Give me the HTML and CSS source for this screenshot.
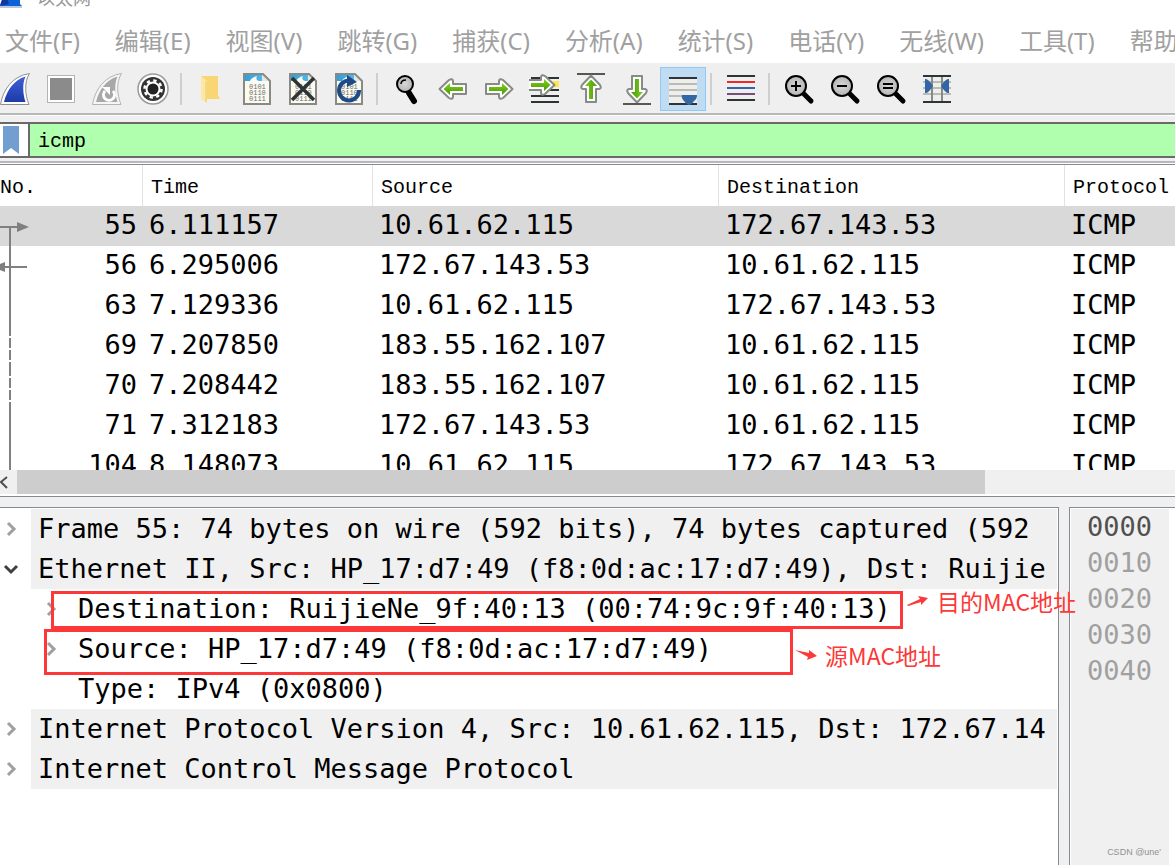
FILE: index.html
```html
<!DOCTYPE html>
<html lang="zh-CN">
<head>
  <meta charset="UTF-8">
  <meta name="viewport" content="width=device-width, initial-scale=1.0">
  <title>以太网</title>
  <link rel="stylesheet" href="styles.css">
</head>
<body>
  <!-- shared icon parts -->
  <svg class="defs" width="0" height="0">
    <defs>
      <linearGradient id="blue" x1="0" y1="0" x2="0" y2="1">
        <stop offset="0" stop-color="#4060d8"/><stop offset="1" stop-color="#1c3aa8"/>
      </linearGradient>
      <linearGradient id="green" x1="0" y1="0" x2="0" y2="1">
        <stop offset="0" stop-color="#82d01e"/><stop offset="1" stop-color="#469a06"/>
      </linearGradient>
      <linearGradient id="sky" x1="0" y1="0" x2="1" y2="0">
        <stop offset="0" stop-color="#2f9fdc"/><stop offset="1" stop-color="#5cc0ec"/>
      </linearGradient>
      <radialGradient id="lens">
        <stop offset="0" stop-color="#d8d8d8"/><stop offset="1" stop-color="#b4b4b4"/>
      </radialGradient>
      <symbol id="page" viewBox="0 0 32 32">
        <path d="M3 1H22L29 8V31H3Z" fill="#fbfbf2"/>
        <path d="M4 2H21L27 8H18C15 7 15 5 16 3C12 4 10 6 9 8H4Z" fill="url(#sky)"/>
        <path d="M21 2V8H28Z" fill="#e8e8e0"/>
        <g class="bits"><text x="8" y="16">0101</text><text x="8" y="22">0110</text><text x="8" y="28">0111</text></g>
        <path d="M3 1H22L29 8V31H3Z" fill="none" stroke="#888a85" stroke-width="2"/>
      </symbol>
      <symbol id="arrow" viewBox="0 0 32 32">
        <path d="M3 11H16V8Q16.500 5 20 7L29.500 16L20 25Q16.500 27 16 24V21H3Z" fill="#fff" stroke="#888a85" stroke-width="2" stroke-linejoin="round"/>
        <path d="M6 14H19V10L25.500 16L19 22V18H6Z" fill="url(#green)"/>
      </symbol>
      <symbol id="zoom" viewBox="0 0 32 32">
        <path d="M21 21L28 28" stroke="#000" stroke-width="5" stroke-linecap="round"/>
        <circle cx="13" cy="13" r="10" fill="url(#lens)" stroke="#000" stroke-width="2"/>
      </symbol>
    </defs>
  </svg>

  <header class="titlebar">
    <svg class="app-icon" width="22" height="22" viewBox="0 0 22 22">
      <path d="M0 20C2 10 8 2 20 0V18L22 20Z" fill="#0d62d8"/>
      <path d="M0 20C1 16 3 11 6 8L9 18Z" fill="#1238a0"/>
      <path d="M0 20H22V22H0Z" fill="#b9c8dc"/>
    </svg>
    <span class="title">以太网</span>
  </header>

  <nav class="menubar">
    <button>文件(F)</button>
    <button>编辑(E)</button>
    <button>视图(V)</button>
    <button>跳转(G)</button>
    <button>捕获(C)</button>
    <button>分析(A)</button>
    <button>统计(S)</button>
    <button>电话(Y)</button>
    <button>无线(W)</button>
    <button>工具(T)</button>
    <button>帮助(H)</button>
  </nav>

  <div class="toolbar" role="toolbar">
    <button aria-label="Start capture"><svg viewBox="0 0 32 32">
      <path d="M1.500 31.500C4 17 13 3 30.500 .500C25 9 26 22 30 31.500Z" fill="#fff" stroke="#8f8f8f"/>
      <path d="M5 29C8 17 15 7 26.500 3.500C23 11 24 21 26.500 29Z" fill="url(#blue)"/>
    </svg></button>
    <button aria-label="Stop capture"><svg viewBox="0 0 32 32">
      <rect x="2.500" y="2.500" width="27" height="27" fill="#fff" stroke="#b4b4b4"/>
      <rect x="5" y="5" width="22" height="22" fill="#8b8b8b"/>
    </svg></button>
    <button aria-label="Restart capture"><svg viewBox="0 0 32 32">
      <path d="M1.500 31.500C4 17 13 3 30.500 .500C25 9 26 22 30 31.500Z" fill="#f6f6f6" stroke="#b4b4b4"/>
      <path d="M5 29C8 17 15 7 26.500 3.500C23 11 24 21 26.500 29Z" fill="#a8a8a8"/>
      <path d="M14 18A5.500 5.500 0 1 0 22 18" fill="none" stroke="#fff" stroke-width="3"/>
      <path d="M11 14H19V22Z" fill="#fff"/>
    </svg></button>
    <button aria-label="Capture options"><svg viewBox="0 0 32 32">
      <circle cx="16" cy="16" r="15" fill="#fff" stroke="#9a9a9a" stroke-width="1.500"/>
      <circle cx="16" cy="16" r="12" fill="#333"/>
      <circle cx="16" cy="16" r="6.500" fill="#222" stroke="#fff" stroke-width="2"/>
      <circle cx="16" cy="16" r="8.500" fill="none" stroke="#fff" stroke-width="2.500" stroke-dasharray="3.300 3.375"/>
    </svg></button>
    <span class="sep"></span>
    <button aria-label="Open"><svg viewBox="0 0 32 32">
      <path d="M6 3H23V22L25 26H10Z" fill="#f9d673"/>
      <path d="M6 3L12 8V30L6 26Z" fill="#fde8a4"/>
      <path d="M11 8V29" stroke="#f0c860"/>
    </svg></button>
    <button aria-label="Save"><svg viewBox="0 0 32 32"><use href="#page"/></svg></button>
    <button aria-label="Close file"><svg viewBox="0 0 32 32"><use href="#page"/>
      <path d="M5 5L27 27M27 5L5 27" stroke="#2e3436" stroke-width="3.500"/>
    </svg></button>
    <button aria-label="Reload file"><svg viewBox="0 0 32 32"><use href="#page"/>
      <path d="M17 7.500A10 10 0 1 0 26 17" fill="none" stroke="#204a87" stroke-width="4"/>
      <path d="M14 2L24 9L14 14Z" fill="#204a87"/>
    </svg></button>
    <span class="sep"></span>
    <button aria-label="Find packet"><svg viewBox="0 0 32 32">
      <path d="M18 20L23 28" stroke="#000" stroke-width="6" stroke-linecap="round"/>
      <circle cx="14" cy="11" r="8" fill="url(#lens)" stroke="#000" stroke-width="2"/>
      <path d="M10 11Q10 7 15 7" fill="none" stroke="#000" stroke-width="1.500"/>
    </svg></button>
    <button aria-label="Previous packet"><svg viewBox="0 0 32 32"><use href="#arrow" transform="matrix(-1 0 0 1 32 0)"/></svg></button>
    <button aria-label="Next packet"><svg viewBox="0 0 32 32"><use href="#arrow"/></svg></button>
    <button aria-label="Go to packet"><svg viewBox="0 0 32 32">
      <path d="M24 11H30" stroke="#fce94f" stroke-width="6"/>
      <path d="M2 5H30M2 17H30M2 23H30M2 29H30" stroke="#2e3436" stroke-width="2"/>
      <use href="#arrow" x="-4" y="-4"/>
    </svg></button>
    <button aria-label="First packet"><svg viewBox="0 0 32 32">
      <path d="M2 1H30" stroke="#555753" stroke-width="2"/>
      <use href="#arrow" transform="rotate(-90 16 16)"/>
    </svg></button>
    <button aria-label="Last packet"><svg viewBox="0 0 32 32">
      <use href="#arrow" transform="rotate(90 16 16)"/>
      <path d="M2 31H30" stroke="#555753" stroke-width="2"/>
    </svg></button>
    <button class="checked" aria-label="Auto scroll" aria-pressed="true"><svg viewBox="0 0 32 32">
      <path d="M2 5H30V31H2Z" fill="#eeeeec"/>
      <path d="M2 11H30M2 17H30M2 23H30" stroke="#babdb6" stroke-width="2"/>
      <path d="M2 5H30M2 31H30" stroke="#2e3436" stroke-width="2"/>
      <path d="M15 22H30Q30 26 27 28Q24 32 22 32Q20 32 17 28Q14 25 15 22Z" fill="#3465a4"/>
    </svg></button>
    <span class="sep"></span>
    <button aria-label="Colorize"><svg viewBox="0 0 32 32">
      <path d="M2 3H30M2 27H30" stroke="#2e3436" stroke-width="2"/>
      <path d="M2 9H30" stroke="#ef2929" stroke-width="2"/>
      <path d="M2 15H30" stroke="#3465a4" stroke-width="2"/>
      <path d="M2 21H30" stroke="#75507b" stroke-width="2"/>
    </svg></button>
    <span class="sep"></span>
    <button aria-label="Zoom in"><svg viewBox="0 0 32 32"><use href="#zoom"/><path d="M8 13H18M13 8V18" stroke="#000" stroke-width="2"/></svg></button>
    <button aria-label="Zoom out"><svg viewBox="0 0 32 32"><use href="#zoom"/><path d="M8 13H18" stroke="#000" stroke-width="2"/></svg></button>
    <button aria-label="Normal size"><svg viewBox="0 0 32 32"><use href="#zoom"/><path d="M8 11H18M8 15H18" stroke="#000" stroke-width="2"/></svg></button>
    <button aria-label="Resize columns"><svg viewBox="0 0 32 32">
      <path d="M2 4H30V28H2Z" fill="#eeeeec"/>
      <path d="M2 9H30M2 15H30M2 21H30" stroke="#babdb6" stroke-width="2"/>
      <path d="M11 2V30M21 2V30" stroke="#888a85" stroke-width="2"/>
      <path d="M2 3H30M2 29H30" stroke="#2e3436" stroke-width="2"/>
      <path d="M4 6Q7 5 12 13Q7 21 4 20ZM28 6Q25 5 20 13Q25 21 28 20Z" fill="#3465a4"/>
    </svg></button>
  </div>

  <form class="filterbar">
    <button type="button" class="bookmark" aria-label="Bookmarks">
      <svg width="16" height="28" viewBox="0 0 16 28"><path d="M0 0H16V28L8 22L0 28Z" fill="#729fcf"/></svg>
    </button>
    <input type="text" value="icmp" aria-label="Display filter" spellcheck="false">
  </form>

  <main class="panes">
    <section class="packets">
      <div class="packet-view">
        <table>
          <colgroup><col class="c-no"><col class="c-time"><col class="c-addr"><col class="c-addr"><col></colgroup>
          <thead>
            <tr><th>No.</th><th>Time</th><th>Source</th><th>Destination</th><th>Protocol</th></tr>
          </thead>
          <tbody>
            <tr class="selected"><td>55</td><td>6.111157</td><td>10.61.62.115</td><td>172.67.143.53</td><td>ICMP</td></tr>
            <tr><td>56</td><td>6.295006</td><td>172.67.143.53</td><td>10.61.62.115</td><td>ICMP</td></tr>
            <tr><td>63</td><td>7.129336</td><td>10.61.62.115</td><td>172.67.143.53</td><td>ICMP</td></tr>
            <tr><td>69</td><td>7.207850</td><td>183.55.162.107</td><td>10.61.62.115</td><td>ICMP</td></tr>
            <tr><td>70</td><td>7.208442</td><td>183.55.162.107</td><td>10.61.62.115</td><td>ICMP</td></tr>
            <tr><td>71</td><td>7.312183</td><td>172.67.143.53</td><td>10.61.62.115</td><td>ICMP</td></tr>
            <tr><td>104</td><td>8.148073</td><td>10.61.62.115</td><td>172.67.143.53</td><td>ICMP</td></tr>
          </tbody>
        </table>
        <!-- request / response markers -->
        <svg class="related" width="30" height="280" viewBox="0 0 30 280">
          <path d="M0 21H18M5 61H27M10 21V130M10 132V142M10 144V154M10 156V170M10 172V182M10 184V194M10 196V280" fill="none" stroke="#808080" stroke-width="2"/>
          <path d="M17 16L29 21L17 26ZM5 56L-7 61L5 66Z" fill="#808080"/>
        </svg>
      </div>
      <div class="scrollbar">
        <button aria-label="Scroll left"><svg width="17" height="24" viewBox="0 0 17 24"><path d="M7 7L1 12L7 18" fill="none" stroke="#505050" stroke-width="2"/></svg></button>
        <span class="thumb"></span>
      </div>
    </section>

    <section class="lower">
      <div class="details" role="tree">
        <div class="node"><svg class="chevron" viewBox="0 0 16 16"><path d="M5 2L11 8L5 14"/></svg><span>Frame 55: 74 bytes on wire (592 bits), 74 bytes captured (592</span></div>
        <div class="node open"><svg class="chevron" viewBox="0 0 16 16"><path d="M2 5L8 11L14 5"/></svg><span>Ethernet II, Src: HP_17:d7:49 (f8:0d:ac:17:d7:49), Dst: Ruijie</span></div>
        <div class="node child"><svg class="chevron" viewBox="0 0 16 16"><path d="M5 2L11 8L5 14"/></svg><span>Destination: RuijieNe_9f:40:13 (00:74:9c:9f:40:13)</span></div>
        <div class="node child"><svg class="chevron" viewBox="0 0 16 16"><path d="M5 2L11 8L5 14"/></svg><span>Source: HP_17:d7:49 (f8:0d:ac:17:d7:49)</span></div>
        <div class="node child"><i class="chevron"></i><span>Type: IPv4 (0x0800)</span></div>
        <div class="node"><svg class="chevron" viewBox="0 0 16 16"><path d="M5 2L11 8L5 14"/></svg><span>Internet Protocol Version 4, Src: 10.61.62.115, Dst: 172.67.14</span></div>
        <div class="node"><svg class="chevron" viewBox="0 0 16 16"><path d="M5 2L11 8L5 14"/></svg><span>Internet Control Message Protocol</span></div>
      </div>
      <div class="bytes">
        <div class="offsets">
          <div class="current">0000</div>
          <div>0010</div>
          <div>0020</div>
          <div>0030</div>
          <div>0040</div>
        </div>
      </div>

      <!-- notes drawn over the panes -->
      <div class="mark mark-dst"></div>
      <div class="mark mark-src"></div>
      <div class="note note-dst"><svg width="22" height="12" viewBox="0 0 22 12"><path d="M0 10L13 4L11 1L21 3L14 10V7L1 11Z"/></svg>目的MAC地址</div>
      <div class="note note-src"><svg width="22" height="12" viewBox="0 0 22 12"><path d="M0 1L14 4V1L22 7L12 11L13 8Z"/></svg>源MAC地址</div>
      <div class="watermark">CSDN @une'</div>
    </section>
  </main>
</body>
</html>
```
FILE: styles.css
```css
* {
  box-sizing: border-box;
}
body {
  margin: 0;
  height: 100vh;
  display: flex;
  flex-direction: column;
  overflow: hidden;
  background: #fff;
  color: #000;
  font-family: "Noto Sans CJK SC", sans-serif;
}
button {
  padding: 0;
  border: none;
  background: none;
  color: inherit;
  font: inherit;
}
.defs {
  position: absolute;
}

/* title and menu */
.titlebar {
  flex: none;
  height: 13px;
  display: flex;
  align-items: flex-end;
  gap: 15px;
  padding: 0 0 5px;
  overflow: hidden;
}
.app-icon {
  flex: none;
}
.title {
  color: #999;
  font-size: 18px;
  line-height: 22px;
}
.menubar {
  flex: none;
  height: 52px;
  display: flex;
  gap: 35px;
  padding: 0 5px;
  overflow: hidden;
  border-bottom: 2px solid #f0f0f0;
  color: #a0a0a0;
  font-family: "Noto Sans", "Noto Sans CJK SC", sans-serif;
  font-size: 24px;
  line-height: 56px;
  white-space: nowrap;
}
.menubar button {
  flex: none;
}

/* toolbar */
.toolbar {
  flex: none;
  display: flex;
  align-items: center;
  height: 50px;
  margin-left: -8px;
  background: #efefef;
  border-bottom: 2px solid #b8bab8;
}
.toolbar button {
  flex: none;
  width: 46px;
  height: 44px;
  border: 1px solid transparent;
}
.toolbar svg {
  display: block;
  width: 32px;
  height: 32px;
  margin: 0 auto;
}
.toolbar .checked {
  background: #c0dcf3;
  border-color: #90c8f6;
}
.sep {
  flex: none;
  width: 2px;
  height: 32px;
  margin: 0 6px 0 4px;
  background: #cfcfcf;
}
.bits {
  font: 7px "Liberation Mono", monospace;
  fill: #6c6e69;
}

/* filter */
.filterbar {
  flex: none;
  display: flex;
  height: 48px;
  margin-bottom: 1px;
  padding: 6px 0 3px;
  background: #f0f0f0;
  border-top: 1px solid #fff;
  border-bottom: 2px solid #b8b8bc;
}
.bookmark {
  width: 30px;
  padding: 0 6px 0 0;
  background: #fff;
  border: solid #6a6a6a;
  border-width: 2px 2px 2px 0;
}
.bookmark svg {
  display: block;
  margin: 0 auto;
}
.filterbar input {
  flex: 1;
  min-width: 0;
  padding: 2px 8px 0;
  border: solid #6a6a6a;
  border-width: 2px 0;
  background: #afffaf;
  font: 20px "Liberation Mono", monospace;
  outline: none;
}

/* panes */
.panes {
  flex: 1;
  min-height: 0;
  display: flex;
  flex-direction: column;
  gap: 10px;
  background: #f0f0f0;
}
.packets {
  flex: 332 1 0;
  min-height: 0;
  display: flex;
  flex-direction: column;
  background: #fff;
  border: solid #868a93;
  border-width: 1px 0;
}
.packet-view {
  position: relative;
  flex: 1;
  min-height: 0;
  overflow: hidden;
}
table {
  width: 100%;
  table-layout: fixed;
  border-collapse: separate;
  border-spacing: 0;
}
.c-no {
  width: 143px;
}
.c-time {
  width: 230px;
}
.c-addr {
  width: 346px;
}
th {
  height: 41px;
  padding: 3px 8px 0;
  border-right: 1px solid #e2e2e2;
  text-align: left;
  white-space: nowrap;
  font: 20px "Liberation Mono", monospace;
}
th:first-child {
  padding-left: 0;
}
th:last-child {
  border-right: none;
}
td {
  height: 40px;
  padding: 0 6px 2px;
  white-space: nowrap;
  font: 27px/38px "DejaVu Sans Mono", monospace;
}
td:first-child {
  text-align: right;
}
.selected {
  background: #d9d9d9;
}
.related {
  position: absolute;
  left: 0;
  top: 41px;
}
.scrollbar {
  flex: none;
  display: flex;
  height: 26px;
  background: #f0f0f0;
  border-bottom: 2px solid #fff;
}
.scrollbar button {
  width: 17px;
}
.scrollbar svg {
  display: block;
}
.thumb {
  width: 82.4%;
  background: #cdcdcd;
}

.lower {
  position: relative;
  flex: 359 1 0;
  min-height: 0;
  display: flex;
  gap: 10px;
}
.details {
  flex: 1;
  min-width: 0;
  padding: 1px 1px 0 0;
  overflow: hidden;
  background: #fff;
  border: solid #868a93;
  border-width: 1px 1px 0 0;
}
.node {
  display: flex;
  align-items: center;
  height: 40px;
  font: 27px/40px "DejaVu Sans Mono", monospace;
  white-space: pre;
}
.node span {
  flex: 1;
  min-width: 0;
  height: 40px;
  padding-left: 7px;
  overflow: hidden;
  background: #f0f0f0;
}
.chevron {
  flex: none;
  width: 16px;
  height: 16px;
  margin: 0 12px 0 3px;
  fill: none;
  stroke: #a0a0a0;
  stroke-width: 3;
}
.open .chevron {
  stroke: #404040;
}
.child {
  padding-left: 40px;
}
.child span {
  background: none;
}
.bytes {
  flex: none;
  width: 106px;
  padding: 1px 0 0 1px;
  background: #fff;
  border: solid #868a93;
  border-width: 1px 0 0 1px;
}
.offsets {
  width: 98px;
  height: 100%;
  padding-left: 16px;
  background: #f0f0f0;
  color: #a0a0a0;
  font: 27px/36px "DejaVu Sans Mono", monospace;
}
.offsets .current {
  color: #505050;
}

/* notes */
.mark {
  position: absolute;
  border: 3px solid #fc3838;
}
.mark-dst {
  left: 51px;
  top: 84px;
  width: 852px;
  height: 38px;
}
.mark-src {
  left: 44px;
  top: 122px;
  width: 749px;
  height: 46px;
}
.note {
  position: absolute;
  display: flex;
  align-items: center;
  gap: 8px;
  color: #fc3838;
  font-size: 23px;
  line-height: 32px;
  white-space: nowrap;
}
.note svg {
  fill: #fc3838;
}
.note-dst {
  left: 907px;
  top: 78px;
}
.note-src {
  left: 795px;
  top: 132px;
}
.watermark {
  position: absolute;
  right: 14px;
  bottom: 5px;
  color: #909090;
  font: 9px/16px "Liberation Sans", sans-serif;
}
```
